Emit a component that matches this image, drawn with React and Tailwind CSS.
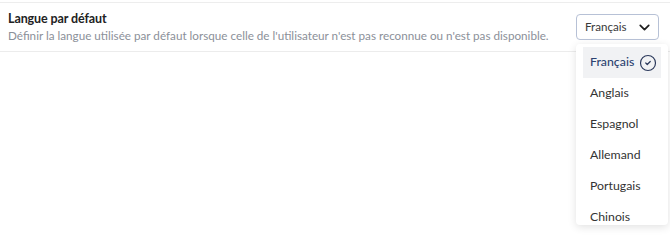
import { ChevronDown, CircleCheck } from "lucide-react";

const LANGS = ["Français", "Anglais", "Espagnol", "Allemand", "Portugais", "Chinois"];

export default function App() {
  const selected = "Français";

  return (
    <div
      className="relative w-[670px] h-[236px] overflow-hidden bg-white"
      style={{ fontFamily: "Lato, 'Noto Sans', sans-serif" }}
    >
      <div className="mt-[2px] border-t border-[#ededed]" />
      <div className="flex items-center justify-between h-[49px] pl-[8px] pr-[11px] border-b border-[#ececec]">
        <div className="flex flex-col">
          <span className="text-[12.5px] font-bold text-[#222] leading-[17px] tracking-[-0.1px]">Langue par défaut</span>
          <span className="text-[11.7px] text-[#8b9099] leading-[17px]">
            Définir la langue utilisée par défaut lorsque celle de l'utilisateur n'est pas reconnue ou n'est pas disponible.
          </span>
        </div>

        <div className="relative">
          <button className="flex items-center gap-[9px] w-[83px] h-[26px] pl-[8px] rounded-[4px] border border-[#b7c1d6] text-[11.6px] text-[#3a3a3a] bg-white">
            {selected}
            <ChevronDown size={17} strokeWidth={2.4} className="text-[#1f1f1f]" />
          </button>

          {/* menu */}
          <div className="absolute left-0 top-[30px] w-[92px] h-[181px] overflow-hidden bg-white rounded-[4px] shadow-[0_2px_8px_rgba(0,0,0,0.12)] px-[7px] pt-[3px]">
            {LANGS.map((lang) => (
              <div
                key={lang}
                className={`flex items-center gap-[5px] h-[31px] pl-[7px] text-[12.3px] ${
                  lang === selected ? "bg-[#f1f2f4] text-[#2c4270] font-medium" : "text-[#333]"
                }`}
              >
                {lang}
                {lang === selected && <CircleCheck size={18} strokeWidth={1.6} className="text-[#2c3a5c]" />}
              </div>
            ))}
          </div>
        </div>
      </div>
    </div>
  );
}
